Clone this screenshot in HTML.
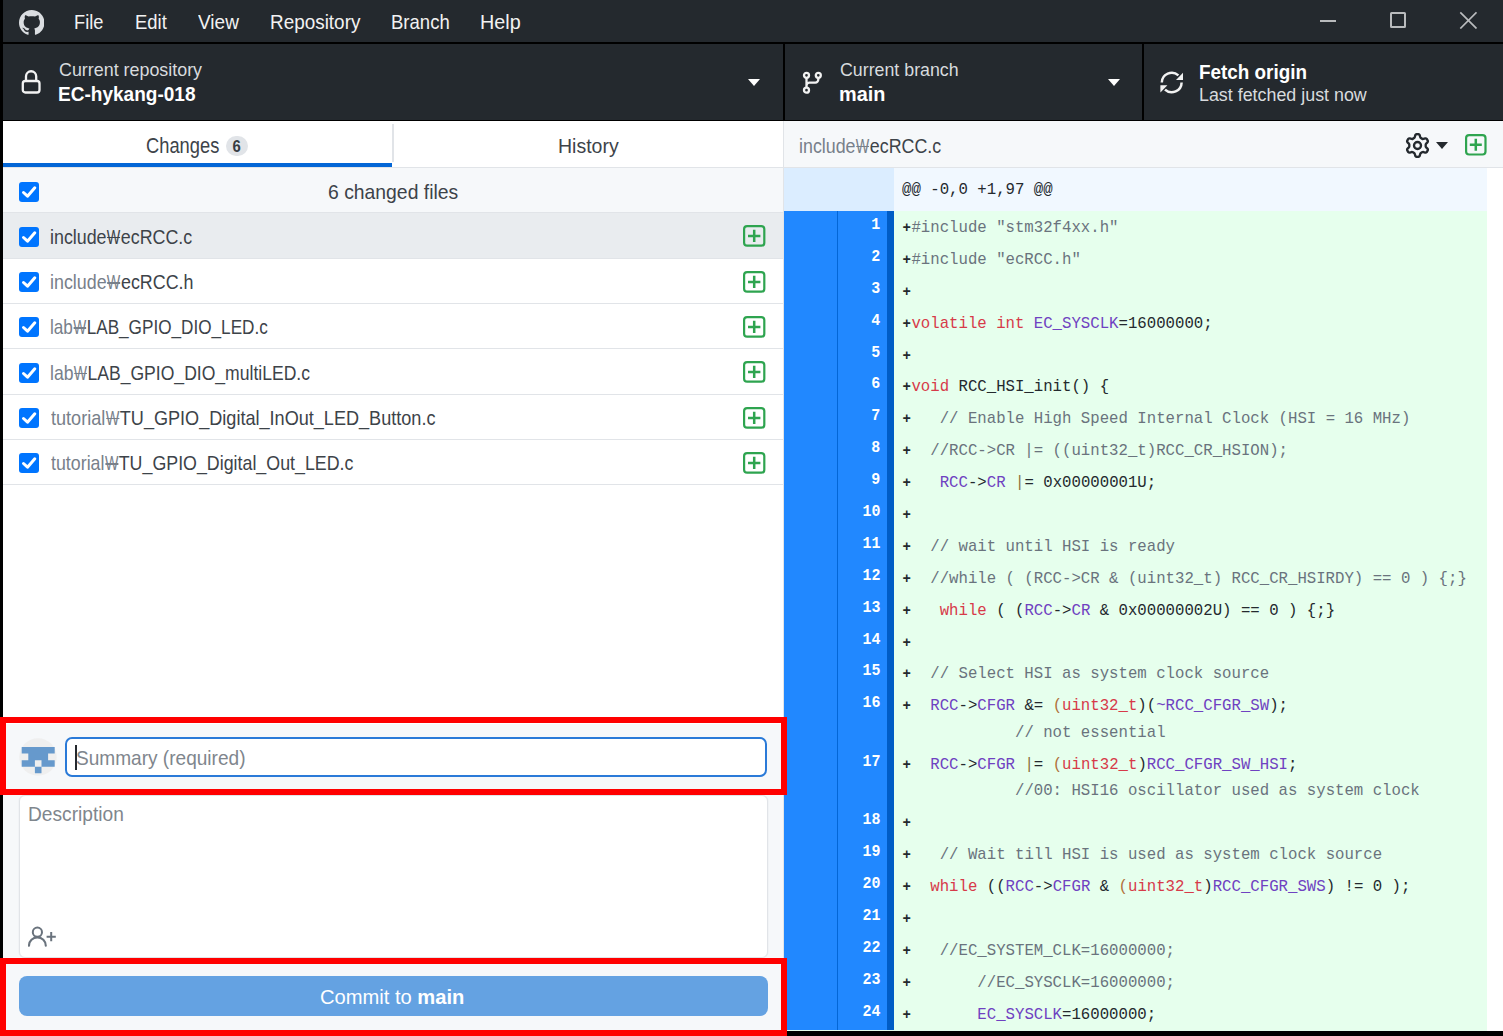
<!DOCTYPE html>
<html><head><meta charset="utf-8">
<style>
*{box-sizing:border-box;margin:0;padding:0}
html,body{width:1503px;height:1036px;overflow:hidden;background:#000;font-family:"Liberation Sans",sans-serif;position:relative}
.a{position:absolute;white-space:nowrap}
#menubar{left:3px;top:0;width:1500px;height:42px;background:#24292e}
.m{position:absolute;top:11px;font-size:19px;line-height:22px;color:#fff}
#toolbar{left:3px;top:44px;width:1500px;height:76px;background:#24292e}
.tsec{position:absolute;top:0;height:76px;background:#24292e}
.sub{position:absolute;font-size:18px;line-height:20px;color:#d1d5da;white-space:nowrap}
.big{position:absolute;font-size:19px;line-height:22px;color:#fff;font-weight:bold;white-space:nowrap}
.caret{position:absolute;width:0;height:0;border-left:6px solid transparent;border-right:6px solid transparent;border-top:7px solid #fff}
#left{left:3px;top:121px;width:780px;height:910px;background:#fff}
#tabs{position:absolute;left:0;top:0;width:780px;height:47px;background:#fff;border-bottom:1px solid #e1e4e8}
.tab{position:absolute;top:0;height:47px;font-size:19px;color:#24292e}
#hdr{position:absolute;left:0;top:47px;width:780px;height:45px;background:#f6f8fa;border-bottom:1px solid #e1e4e8}
.frow{position:relative;height:45.3px;border-bottom:1px solid #e1e4e8;background:#fff}
.frow.sel{background:#e9ecef}
.frow .chk{position:absolute;left:16px;top:13.5px}

.frow .plus{position:absolute;left:740.4px;top:12px}
#right{left:783px;top:121px;width:720px;height:910px;background:#fff;border-left:1px solid #e1e4e8}
#dhdr{position:absolute;left:0;top:0;width:719px;height:47px;background:#f6f8fa;border-bottom:1px solid #e1e4e8}
#diff{position:absolute;left:0;top:47px;width:703.4px;height:863px;background:#e6ffed;overflow:hidden}
.tx{position:absolute;white-space:nowrap;line-height:1;transform-origin:0 0}
.won{display:inline-block;position:relative;width:0.8em;text-indent:0.02em;transform:scaleX(0.8);transform-origin:0 0}
.won i{position:absolute;left:0.05em;width:0.9em;top:0.48em;height:0.075em;background:currentColor}
.pl{display:inline-block;width:9.42px;text-align:center;font-weight:bold;font-size:14px;color:#24292e;vertical-align:top}
.hunk{position:relative;height:43px;background:#f1f8ff}
.hunk .g{position:absolute;left:0;top:0;width:110px;height:43px;background:#dbedff}
.hunk .t{position:absolute;left:118px;top:10.5px;font-family:"Liberation Mono",monospace;font-size:15.7px;line-height:22px;color:#24292e}
.row{position:relative;height:31.9px}
.row.w{height:58.5px}
.row .ln{position:absolute;left:0;top:0;width:103px;height:100%;background:#2188ff;border-right:7px solid #005cc5;color:#fff;font-family:"Liberation Mono",monospace;font-weight:bold;font-size:17px;text-align:right;padding-right:7px;padding-top:4px;line-height:20px}
.row .ln span{display:inline-block;transform:scaleX(0.88);transform-origin:100% 50%}
.row .ln:before{content:"";position:absolute;left:53px;top:0;width:1px;height:100%;background:#0366d6}
.row .ln{width:110px}
.row .code{position:absolute;left:118px;top:4px;font-family:"Liberation Mono",monospace;font-size:15.7px;line-height:26.5px;white-space:pre;color:#24292e}
</style></head><body>
<div id="menubar" class="a">
  <svg class="a" style="left:15.5px;top:9.5px" width="25.5" height="25.5" viewBox="0 0 16 16"><path fill="#dadde1" d="M8 0C3.58 0 0 3.58 0 8c0 3.54 2.29 6.53 5.47 7.59.4.07.55-.17.55-.38 0-.19-.01-.82-.01-1.49-2.01.37-2.53-.49-2.69-.94-.09-.23-.48-.94-.82-1.13-.28-.15-.68-.52-.01-.53.63-.01 1.08.58 1.23.82.72 1.21 1.87.87 2.33.66.07-.52.28-.87.51-1.07-1.78-.2-3.64-.89-3.64-3.95 0-.87.31-1.59.82-2.15-.08-.2-.36-1.02.08-2.12 0 0 .67-.21 2.2.82.64-.18 1.32-.27 2-.27.68 0 1.36.09 2 .27 1.53-1.04 2.2-.82 2.2-.82.44 1.1.16 1.92.08 2.12.51.56.82 1.27.82 2.15 0 3.07-1.87 3.75-3.65 3.95.29.25.54.73.54 1.48 0 1.07-.01 1.93-.01 2.2 0 .21.15.46.55.38A8.013 8.013 0 0016 8c0-4.42-3.58-8-8-8z"/></svg>
  <div class="a" style="left:1317px;top:20px;width:16px;height:2px;background:#b9bbbd"></div>
  <div class="a" style="left:1387px;top:12px;width:16px;height:16px;border:2px solid #b9bbbd;border-radius:1.5px"></div>
  <svg class="a" style="left:1456px;top:11px" width="18" height="18" viewBox="0 0 18 18"><path d="M1.3 1.3 L17.5 17.5 M17.5 1.3 L1.3 17.5" stroke="#b9bbbd" stroke-width="1.7"/></svg>
</div>
<div id="toolbar" class="a">
  <div class="tsec" style="left:0;width:780px">
    <svg class="a" style="left:17px;top:25px" width="22" height="26" viewBox="0 0 22 26"><path d="M6 12.5 V7.35 a5.1 5.1 0 0 1 10.2 0 V12.5" fill="none" stroke="#f2f2f2" stroke-width="2.3"/><rect x="2.8" y="12" width="16.7" height="11.5" rx="2.5" fill="none" stroke="#f2f2f2" stroke-width="2.3"/></svg>
    <div class="caret" style="left:745px;top:35px"></div>
  </div>
  <div class="a" style="left:780px;top:0;width:2px;height:76px;background:#000"></div>
  <div class="tsec" style="left:782px;width:357px">
    <svg class="a" style="left:16px;top:26px" width="24" height="26" viewBox="0 0 24 26"><circle cx="5.5" cy="5.3" r="2.5" fill="none" stroke="#f2f2f2" stroke-width="2.3"/><circle cx="17.3" cy="5.3" r="2.5" fill="none" stroke="#f2f2f2" stroke-width="2.3"/><circle cx="5.5" cy="20.2" r="2.5" fill="none" stroke="#f2f2f2" stroke-width="2.3"/><path d="M5.5 7.8 V17.7 M17.3 7.8 V9.6 a3 3 0 0 1 -3 3 H8.5 a3 3 0 0 0 -3 3" fill="none" stroke="#f2f2f2" stroke-width="2.3"/></svg>
    <div class="caret" style="left:323px;top:35px"></div>
  </div>
  <div class="a" style="left:1139px;top:0;width:2px;height:76px;background:#000"></div>
  <div class="tsec" style="left:1141px;width:359px">
    <svg class="a" style="left:11px;top:21px" width="35" height="35" viewBox="0 0 35 35"><path d="M6.8 17.6 A9.9 9.9 0 0 1 23.4 10.4" fill="none" stroke="#f2f2f2" stroke-width="2.5"/><path d="M26.6 17.4 A9.9 9.9 0 0 1 10 24.6" fill="none" stroke="#f2f2f2" stroke-width="2.5"/><path d="M28 7.8 V14.9 H21 Z" fill="#f2f2f2"/><path d="M5.4 20.3 H12.4 L5.4 27.4 Z" fill="#f2f2f2"/></svg>
  </div>
</div>
<div id="left" class="a">
  <div id="tabs">
    <div class="tab" style="left:0;width:389px"><span class="a" style="left:223px;top:15px;width:22px;height:20px;border-radius:10px;background:#e1e4e8;font-size:16.5px;font-weight:700;color:#363c42;text-align:center;line-height:21px"><span style="display:inline-block;transform:scaleX(0.9)">6</span></span></div>
    <div class="a" style="left:0;top:42px;width:389px;height:4px;background:#0366d6"></div>
    <div class="tab" style="left:390px;width:390px"></div><div class="a" style="left:389px;top:3px;width:2px;height:38px;background:#e1e4e8"></div>
  </div>
  <div id="hdr">
    <svg class="a" style="left:16px;top:14px" width="20" height="20" viewBox="0 0 20 20"><rect x="0" y="0" width="20" height="20" rx="3" fill="#0075ff"/><path d="M4.5 10.5 L8.5 14.2 L15.8 5.8" fill="none" stroke="#fff" stroke-width="3" stroke-linecap="round" stroke-linejoin="round"/></svg>
  </div>
  <div class="a" style="left:0;top:92.4px;width:780px">
<div class="frow sel"><svg class="chk" width="20" height="20" viewBox="0 0 20 20"><rect x="0" y="0" width="20" height="20" rx="3" fill="#0075ff"/><path d="M4.5 10.5 L8.5 14.2 L15.8 5.8" fill="none" stroke="#fff" stroke-width="3" stroke-linecap="round" stroke-linejoin="round"/></svg><svg class="plus" width="23" height="23" viewBox="0 0 23 23"><rect x="1.1" y="1.1" width="20.2" height="19.6" rx="3" fill="none" stroke="#2ea44f" stroke-width="2.2"/><path d="M5 10.9 H17.4 M11.2 4.8 V17" stroke="#2ea44f" stroke-width="2.5"/></svg></div>
<div class="frow"><svg class="chk" width="20" height="20" viewBox="0 0 20 20"><rect x="0" y="0" width="20" height="20" rx="3" fill="#0075ff"/><path d="M4.5 10.5 L8.5 14.2 L15.8 5.8" fill="none" stroke="#fff" stroke-width="3" stroke-linecap="round" stroke-linejoin="round"/></svg><svg class="plus" width="23" height="23" viewBox="0 0 23 23"><rect x="1.1" y="1.1" width="20.2" height="19.6" rx="3" fill="none" stroke="#2ea44f" stroke-width="2.2"/><path d="M5 10.9 H17.4 M11.2 4.8 V17" stroke="#2ea44f" stroke-width="2.5"/></svg></div>
<div class="frow"><svg class="chk" width="20" height="20" viewBox="0 0 20 20"><rect x="0" y="0" width="20" height="20" rx="3" fill="#0075ff"/><path d="M4.5 10.5 L8.5 14.2 L15.8 5.8" fill="none" stroke="#fff" stroke-width="3" stroke-linecap="round" stroke-linejoin="round"/></svg><svg class="plus" width="23" height="23" viewBox="0 0 23 23"><rect x="1.1" y="1.1" width="20.2" height="19.6" rx="3" fill="none" stroke="#2ea44f" stroke-width="2.2"/><path d="M5 10.9 H17.4 M11.2 4.8 V17" stroke="#2ea44f" stroke-width="2.5"/></svg></div>
<div class="frow"><svg class="chk" width="20" height="20" viewBox="0 0 20 20"><rect x="0" y="0" width="20" height="20" rx="3" fill="#0075ff"/><path d="M4.5 10.5 L8.5 14.2 L15.8 5.8" fill="none" stroke="#fff" stroke-width="3" stroke-linecap="round" stroke-linejoin="round"/></svg><svg class="plus" width="23" height="23" viewBox="0 0 23 23"><rect x="1.1" y="1.1" width="20.2" height="19.6" rx="3" fill="none" stroke="#2ea44f" stroke-width="2.2"/><path d="M5 10.9 H17.4 M11.2 4.8 V17" stroke="#2ea44f" stroke-width="2.5"/></svg></div>
<div class="frow"><svg class="chk" width="20" height="20" viewBox="0 0 20 20"><rect x="0" y="0" width="20" height="20" rx="3" fill="#0075ff"/><path d="M4.5 10.5 L8.5 14.2 L15.8 5.8" fill="none" stroke="#fff" stroke-width="3" stroke-linecap="round" stroke-linejoin="round"/></svg><svg class="plus" width="23" height="23" viewBox="0 0 23 23"><rect x="1.1" y="1.1" width="20.2" height="19.6" rx="3" fill="none" stroke="#2ea44f" stroke-width="2.2"/><path d="M5 10.9 H17.4 M11.2 4.8 V17" stroke="#2ea44f" stroke-width="2.5"/></svg></div>
<div class="frow"><svg class="chk" width="20" height="20" viewBox="0 0 20 20"><rect x="0" y="0" width="20" height="20" rx="3" fill="#0075ff"/><path d="M4.5 10.5 L8.5 14.2 L15.8 5.8" fill="none" stroke="#fff" stroke-width="3" stroke-linecap="round" stroke-linejoin="round"/></svg><svg class="plus" width="23" height="23" viewBox="0 0 23 23"><rect x="1.1" y="1.1" width="20.2" height="19.6" rx="3" fill="none" stroke="#2ea44f" stroke-width="2.2"/><path d="M5 10.9 H17.4 M11.2 4.8 V17" stroke="#2ea44f" stroke-width="2.5"/></svg></div>
  </div>
  <div class="a" style="left:0;top:603px;width:780px;height:308px;background:#f6f8fa"></div>
  <!-- avatar -->
  <svg class="a" style="left:16px;top:617px" width="38" height="38" viewBox="0 0 38 38"><circle cx="19" cy="19" r="18.7" fill="#efefef"/><path fill="#6699cc" fill-rule="evenodd" d="M2.7 9 H35.7 V15.6 H29.1 V22.2 H35.7 V28.8 H22.5 V35.2 H15.9 V28.8 H2.7 V22.2 H9.3 V15.6 H2.7 Z M15.9 22.2 H22.5 V28.8 H15.9 Z"/></svg>
  <div class="a" style="left:62px;top:616px;width:702px;height:40px;border:2px solid #2a7ad8;border-radius:7px;background:#fff"></div>
  <div class="a" style="left:71.5px;top:624px;width:2px;height:25px;background:#24292e"></div>
  <div class="a" style="left:16px;top:674px;width:748.5px;height:163px;border:1px solid #e1e4e8;border-radius:6px;background:#fff;box-shadow:0 0 0 0.5px #eceef1"></div>
  <svg class="a" style="left:25px;top:803px" width="30" height="24" viewBox="0 0 30 24"><circle cx="9.4" cy="8.2" r="4.6" fill="none" stroke="#6a737d" stroke-width="2"/><path d="M1 21.8 A8.4 8.4 0 0 1 17.8 21.8" fill="none" stroke="#6a737d" stroke-width="2.1" stroke-linecap="round"/><path d="M18.6 12.7 H27.8 M23.2 8.1 V17.3" stroke="#6a737d" stroke-width="2"/></svg>
  <div class="a" style="left:15.5px;top:855px;width:749px;height:40px;border-radius:8px;background:#64a2e2"></div>
</div>
<div id="right" class="a">
  <div id="dhdr">
    <svg class="a" style="left:621px;top:12px" width="25" height="25" viewBox="0 0 16 16"><path fill="#24292e" fill-rule="evenodd" d="M7.429 1.525a6.593 6.593 0 011.142 0c.036.003.108.036.137.146l.289 1.105c.147.56.55.967.997 1.189.174.086.341.183.501.29.417.278.97.423 1.53.27l1.102-.303c.11-.03.175.016.195.046.219.31.41.641.573.989.014.031.022.11-.059.19l-.815.806c-.411.406-.562.957-.53 1.456a4.588 4.588 0 010 .582c-.032.499.119 1.05.53 1.456l.815.806c.08.08.073.159.059.19a6.494 6.494 0 01-.573.99c-.02.029-.086.074-.195.045l-1.103-.303c-.559-.153-1.112-.008-1.529.27-.16.107-.327.204-.5.29-.449.222-.851.628-.998 1.189l-.289 1.105c-.029.11-.101.143-.137.146a6.613 6.613 0 01-1.142 0c-.036-.003-.108-.037-.137-.146l-.289-1.105c-.147-.56-.55-.967-.997-1.189a4.502 4.502 0 01-.501-.29c-.417-.278-.97-.423-1.53-.27l-1.102.303c-.11.03-.175-.016-.195-.046a6.492 6.492 0 01-.573-.989c-.014-.031-.022-.11.059-.19l.815-.806c.411-.406.562-.957.53-1.456a4.587 4.587 0 010-.582c.032-.499-.119-1.05-.53-1.456l-.815-.806c-.08-.08-.073-.159-.059-.19a6.44 6.44 0 01.573-.99c.02-.029.086-.075.195-.045l1.103.303c.559.153 1.112.008 1.529-.27.16-.107.327-.204.5-.29.449-.222.851-.628.998-1.189l.289-1.105c.029-.11.101-.143.137-.146zM8 0c-.236 0-.47.01-.701.03-.743.065-1.29.615-1.458 1.261l-.29 1.106c-.017.066-.078.158-.211.224a5.994 5.994 0 00-.668.386c-.123.082-.233.09-.3.071L3.27 2.776c-.644-.177-1.392.02-1.82.63a7.977 7.977 0 00-.704 1.217c-.315.675-.111 1.422.363 1.891l.815.806c.05.048.098.147.088.294a6.084 6.084 0 000 .772c.01.147-.038.246-.088.294l-.815.806c-.474.469-.678 1.216-.363 1.891.2.428.436.835.704 1.218.428.609 1.176.806 1.82.63l1.103-.303c.066-.019.176-.011.299.071.213.143.436.272.668.386.133.066.194.158.212.224l.289 1.106c.169.646.715 1.196 1.458 1.26a8.094 8.094 0 001.402 0c.743-.064 1.29-.614 1.458-1.26l.29-1.106c.017-.066.078-.158.211-.224a5.98 5.98 0 00.668-.386c.123-.082.233-.09.3-.071l1.102.302c.644.177 1.392-.02 1.82-.63.268-.382.505-.789.704-1.217.315-.675.111-1.422-.364-1.891l-.814-.806c-.05-.048-.098-.147-.088-.294a6.1 6.1 0 000-.772c-.01-.147.039-.246.088-.294l.814-.806c.475-.469.679-1.216.364-1.891a7.992 7.992 0 00-.704-1.218c-.428-.609-1.176-.806-1.82-.63l-1.103.303c-.066.019-.176.011-.299-.071a5.991 5.991 0 00-.668-.386c-.133-.066-.194-.158-.212-.224L10.16 1.29C9.99.645 9.444.095 8.701.031A8.094 8.094 0 008 0zm1.5 8a1.5 1.5 0 11-3 0 1.5 1.5 0 013 0zM11 8a3 3 0 11-6 0 3 3 0 016 0z"/></svg>
    <div class="caret" style="left:652px;top:21px;border-top-color:#24292e;border-left-width:6px;border-right-width:6px;border-top-width:7px"></div>
    <svg class="a" style="left:681.2px;top:13.3px" width="22" height="22" viewBox="0 0 22 22"><rect x="1.1" y="1.1" width="19.4" height="19.4" rx="3" fill="none" stroke="#2ea44f" stroke-width="2.2"/><path d="M4.8 10.8 H16.8 M10.8 4.8 V16.8" stroke="#2ea44f" stroke-width="2.5"/></svg>
  </div>
  <div id="diff">
    <div class="hunk"><div class="g"></div><div class="t">@@ -0,0 +1,97 @@</div></div>
<div class="row"><div class="ln"><span>1</span></div><div class="code"><span class="pl">+</span><span style="color:#24292e"></span><span style="color:#6a737d">#include &quot;stm32f4xx.h&quot;</span></div></div>
<div class="row"><div class="ln"><span>2</span></div><div class="code"><span class="pl">+</span><span style="color:#24292e"></span><span style="color:#6a737d">#include &quot;ecRCC.h&quot;</span></div></div>
<div class="row"><div class="ln"><span>3</span></div><div class="code"><span class="pl">+</span><span style="color:#24292e"></span></div></div>
<div class="row"><div class="ln"><span>4</span></div><div class="code"><span class="pl">+</span><span style="color:#24292e"></span><span style="color:#d73a49">volatile int </span><span style="color:#6f42c1">EC_SYSCLK</span><span style="color:#24292e">=16000000;</span></div></div>
<div class="row"><div class="ln"><span>5</span></div><div class="code"><span class="pl">+</span><span style="color:#24292e"></span></div></div>
<div class="row"><div class="ln"><span>6</span></div><div class="code"><span class="pl">+</span><span style="color:#24292e"></span><span style="color:#d73a49">void</span><span style="color:#24292e"> RCC_HSI_init() {</span></div></div>
<div class="row"><div class="ln"><span>7</span></div><div class="code"><span class="pl">+</span><span style="color:#24292e">   </span><span style="color:#6a737d">// Enable High Speed Internal Clock (HSI = 16 MHz)</span></div></div>
<div class="row"><div class="ln"><span>8</span></div><div class="code"><span class="pl">+</span><span style="color:#24292e">  </span><span style="color:#6a737d">//RCC-&gt;CR |= ((uint32_t)RCC_CR_HSION);</span></div></div>
<div class="row"><div class="ln"><span>9</span></div><div class="code"><span class="pl">+</span><span style="color:#24292e">   </span><span style="color:#6f42c1">RCC</span><span style="color:#24292e">-&gt;</span><span style="color:#6f42c1">CR</span><span style="color:#24292e"> </span><span style="color:#8a6d3b">|</span><span style="color:#24292e">= 0x00000001U;</span></div></div>
<div class="row"><div class="ln"><span>10</span></div><div class="code"><span class="pl">+</span><span style="color:#24292e"></span></div></div>
<div class="row"><div class="ln"><span>11</span></div><div class="code"><span class="pl">+</span><span style="color:#24292e">  </span><span style="color:#6a737d">// wait until HSI is ready</span></div></div>
<div class="row"><div class="ln"><span>12</span></div><div class="code"><span class="pl">+</span><span style="color:#24292e">  </span><span style="color:#6a737d">//while ( (RCC-&gt;CR &amp; (uint32_t) RCC_CR_HSIRDY) == 0 ) {;}</span></div></div>
<div class="row"><div class="ln"><span>13</span></div><div class="code"><span class="pl">+</span><span style="color:#24292e">   </span><span style="color:#d73a49">while</span><span style="color:#24292e"> ( (</span><span style="color:#6f42c1">RCC</span><span style="color:#24292e">-&gt;</span><span style="color:#6f42c1">CR</span><span style="color:#24292e"> &amp; 0x00000002U) == 0 ) {;}</span></div></div>
<div class="row"><div class="ln"><span>14</span></div><div class="code"><span class="pl">+</span><span style="color:#24292e"></span></div></div>
<div class="row"><div class="ln"><span>15</span></div><div class="code"><span class="pl">+</span><span style="color:#24292e">  </span><span style="color:#6a737d">// Select HSI as system clock source</span></div></div>
<div class="row w"><div class="ln"><span>16</span></div><div class="code"><span class="pl">+</span><span style="color:#24292e">  </span><span style="color:#6f42c1">RCC</span><span style="color:#24292e">-&gt;</span><span style="color:#6f42c1">CFGR</span><span style="color:#24292e"> &amp;= </span><span style="color:#b0703a">(</span><span style="color:#d73a49">uint32_t</span><span style="color:#24292e">)(</span><span style="color:#6f42c1">~RCC_CFGR_SW</span><span style="color:#24292e">);</span><br><span style="color:#24292e">            </span><span style="color:#6a737d">// not essential</span></div></div>
<div class="row w"><div class="ln"><span>17</span></div><div class="code"><span class="pl">+</span><span style="color:#24292e">  </span><span style="color:#6f42c1">RCC</span><span style="color:#24292e">-&gt;</span><span style="color:#6f42c1">CFGR</span><span style="color:#24292e"> </span><span style="color:#8a6d3b">|</span><span style="color:#24292e">= </span><span style="color:#b0703a">(</span><span style="color:#d73a49">uint32_t</span><span style="color:#24292e">)</span><span style="color:#6f42c1">RCC_CFGR_SW_HSI</span><span style="color:#24292e">;</span><br><span style="color:#24292e">            </span><span style="color:#6a737d">//00: HSI16 oscillator used as system clock</span></div></div>
<div class="row"><div class="ln"><span>18</span></div><div class="code"><span class="pl">+</span><span style="color:#24292e"></span></div></div>
<div class="row"><div class="ln"><span>19</span></div><div class="code"><span class="pl">+</span><span style="color:#24292e">   </span><span style="color:#6a737d">// Wait till HSI is used as system clock source</span></div></div>
<div class="row"><div class="ln"><span>20</span></div><div class="code"><span class="pl">+</span><span style="color:#24292e">  </span><span style="color:#d73a49">while</span><span style="color:#24292e"> ((</span><span style="color:#6f42c1">RCC</span><span style="color:#24292e">-&gt;</span><span style="color:#6f42c1">CFGR</span><span style="color:#24292e"> &amp; </span><span style="color:#b0703a">(</span><span style="color:#d73a49">uint32_t</span><span style="color:#24292e">)</span><span style="color:#6f42c1">RCC_CFGR_SWS</span><span style="color:#24292e">) != 0 );</span></div></div>
<div class="row"><div class="ln"><span>21</span></div><div class="code"><span class="pl">+</span><span style="color:#24292e"></span></div></div>
<div class="row"><div class="ln"><span>22</span></div><div class="code"><span class="pl">+</span><span style="color:#24292e">   </span><span style="color:#6a737d">//EC_SYSTEM_CLK=16000000;</span></div></div>
<div class="row"><div class="ln"><span>23</span></div><div class="code"><span class="pl">+</span><span style="color:#24292e">       </span><span style="color:#6a737d">//EC_SYSCLK=16000000;</span></div></div>
<div class="row"><div class="ln"><span>24</span></div><div class="code"><span class="pl">+</span><span style="color:#24292e">       </span><span style="color:#6f42c1">EC_SYSCLK</span><span style="color:#24292e">=16000000;</span></div></div>
  </div>
</div>
<div class="a" style="left:0;top:717px;width:787px;height:78px;border:6px solid #ff0000"></div>
<div class="a" style="left:0;top:958px;width:787px;height:78px;border:6px solid #ff0000"></div>
<div class="a" style="left:787px;top:1031px;width:716px;height:5px;background:#000"></div>
<span class="tx" style="left:74.31px;top:12.14px;font-size:20.8px;transform:scaleX(0.8759)"><span style="color:#f2f2f2;font-weight:normal">File</span></span>
<span class="tx" style="left:134.60px;top:12.14px;font-size:20.8px;transform:scaleX(0.8867)"><span style="color:#f2f2f2;font-weight:normal">Edit</span></span>
<span class="tx" style="left:197.54px;top:12.14px;font-size:20.8px;transform:scaleX(0.9140)"><span style="color:#f2f2f2;font-weight:normal">View</span></span>
<span class="tx" style="left:269.90px;top:12.14px;font-size:20.8px;transform:scaleX(0.9092)"><span style="color:#f2f2f2;font-weight:normal">Repository</span></span>
<span class="tx" style="left:391.02px;top:12.14px;font-size:20.8px;transform:scaleX(0.8908)"><span style="color:#f2f2f2;font-weight:normal">Branch</span></span>
<span class="tx" style="left:479.87px;top:12.14px;font-size:20.8px;transform:scaleX(0.9515)"><span style="color:#f2f2f2;font-weight:normal">Help</span></span>
<span class="tx" style="left:59.23px;top:60.84px;font-size:18.5px;transform:scaleX(0.9662)"><span style="color:#d8dbde;font-weight:normal">Current repository</span></span>
<span class="tx" style="left:58.25px;top:84.22px;font-size:20.3px;transform:scaleX(0.9384)"><span style="color:#fff;font-weight:bold">EC-hykang-018</span></span>
<span class="tx" style="left:840.00px;top:60.67px;font-size:18.7px;transform:scaleX(0.9517)"><span style="color:#d8dbde;font-weight:normal">Current branch</span></span>
<span class="tx" style="left:839.49px;top:84.22px;font-size:20.3px;transform:scaleX(0.9787)"><span style="color:#fff;font-weight:bold">main</span></span>
<span class="tx" style="left:1199.41px;top:62.53px;font-size:19.4px;transform:scaleX(0.9728)"><span style="color:#fff;font-weight:bold">Fetch origin</span></span>
<span class="tx" style="left:1199.44px;top:86.31px;font-size:18.3px;transform:scaleX(0.9766)"><span style="color:#d8dbde;font-weight:normal">Last fetched just now</span></span>
<span class="tx" style="left:146.00px;top:135.45px;font-size:21.2px;transform:scaleX(0.8643)"><span style="color:#3d4349;font-weight:normal">Changes</span></span>
<span class="tx" style="left:557.87px;top:135.99px;font-size:20.8px;transform:scaleX(0.9376)"><span style="color:#3d4349;font-weight:normal">History</span></span>
<span class="tx" style="left:327.54px;top:180.72px;font-size:21px;transform:scaleX(0.9215)"><span style="color:#3d4349;font-weight:normal">6 changed files</span></span>
<span class="tx" style="left:49.98px;top:226.61px;font-size:20.9px;transform:scaleX(0.8542)"><span style="color:#3d4349;font-weight:normal">include<span class="won">W<i></i></span></span><span style="color:#3d4349;font-weight:normal">ecRCC.c</span></span>
<span class="tx" style="left:49.98px;top:271.91px;font-size:20.9px;transform:scaleX(0.8558)"><span style="color:#78808a;font-weight:normal">include<span class="won">W<i></i></span></span><span style="color:#3d4349;font-weight:normal">ecRCC.h</span></span>
<span class="tx" style="left:50.03px;top:317.21px;font-size:20.9px;transform:scaleX(0.8214)"><span style="color:#78808a;font-weight:normal">lab<span class="won">W<i></i></span></span><span style="color:#3d4349;font-weight:normal">LAB_GPIO_DIO_LED.c</span></span>
<span class="tx" style="left:50.01px;top:362.51px;font-size:20.9px;transform:scaleX(0.8406)"><span style="color:#78808a;font-weight:normal">lab<span class="won">W<i></i></span></span><span style="color:#3d4349;font-weight:normal">LAB_GPIO_DIO_multiLED.c</span></span>
<span class="tx" style="left:50.82px;top:407.81px;font-size:20.9px;transform:scaleX(0.8659)"><span style="color:#78808a;font-weight:normal">tutorial<span class="won">W<i></i></span></span><span style="color:#3d4349;font-weight:normal">TU_GPIO_Digital_InOut_LED_Button.c</span></span>
<span class="tx" style="left:50.83px;top:453.11px;font-size:20.9px;transform:scaleX(0.8529)"><span style="color:#78808a;font-weight:normal">tutorial<span class="won">W<i></i></span></span><span style="color:#3d4349;font-weight:normal">TU_GPIO_Digital_Out_LED.c</span></span>
<span class="tx" style="left:799.37px;top:136.10px;font-size:20.2px;transform:scaleX(0.8839)"><span style="color:#78808a;font-weight:normal">include<span class="won">W<i></i></span></span><span style="color:#3d4349;font-weight:normal">ecRCC.c</span></span>
<span class="tx" style="left:75.70px;top:747.82px;font-size:20.3px;transform:scaleX(0.9400)"><span style="color:#7f868d;font-weight:normal">Summary (required)</span></span>
<span class="tx" style="left:28.03px;top:804.64px;font-size:19.8px;transform:scaleX(0.9691)"><span style="color:#7f868d;font-weight:normal">Description</span></span>
<span class="tx" style="left:320.30px;top:987.12px;font-size:20.3px;transform:scaleX(0.9931)"><span style="color:#fff;font-weight:normal">Commit to </span><span style="color:#fff;font-weight:bold">main</span></span>
</body></html>
